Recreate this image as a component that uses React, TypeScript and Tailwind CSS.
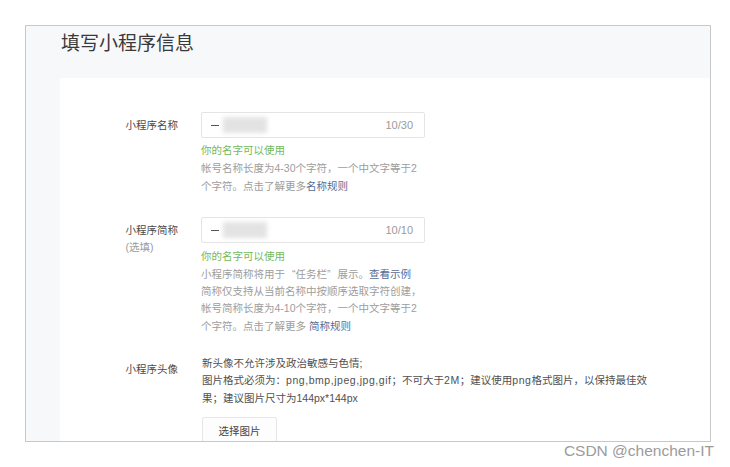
import React from "react";

const font = { fontFamily: '"Liberation Sans", "Noto Sans CJK SC", sans-serif' };

function NameInput({ count }: { count: string }) {
  return (
    <div className="w-[224px] h-[26px] border border-[#e4e4e4] rounded-[2px] bg-white flex items-center pl-[9px] pr-[11px]">
      <div className="w-[8px] h-[1px] bg-[#555]" />
      <div className="ml-[4px] w-[44px] h-[16px] bg-[#e3e3e3] blur-[2px]" />
      <div className="flex-1" />
      <div className="text-[11px] text-[#9a9a9a]">{count}</div>
    </div>
  );
}

function L({ children }: { children: React.ReactNode }) {
  return <span className="tracking-[0.55px]">{children}</span>;
}

export default function App() {
  return (
    <div className="w-[730px] h-[467px] bg-white pt-[25px] pl-[25px] text-[10.5px]" style={font}>
      <div className="w-[686px] h-[417px] border border-[#c8c8c8] bg-[#f7f8fa] overflow-hidden flex flex-col">
        <div className="h-[52px] shrink-0 pl-[35px] pt-[6px] text-[19px] leading-[24px] text-[#3a3a3a]">
          填写小程序信息
        </div>
        <div className="ml-[34px] flex-1 bg-white pt-[34px] flex flex-col">
          {/* Row 1 */}
          <div className="flex">
            <div className="w-[118px] text-right text-[#4a4a4a] leading-[26px]">小程序名称</div>
            <div className="ml-[23px] flex flex-col">
              <NameInput count="10/30" />
              <div className="mt-[3px] leading-[18px] text-[#74b85c]">你的名字可以使用</div>
              <div className="leading-[18px] text-[#9d9d9d] whitespace-nowrap">帐号名称长度为4-30个字符，一个中文字等于2</div>
              <div className="leading-[18px] text-[#9d9d9d] whitespace-nowrap">
                个字符。点击了解更多<span className="text-[#576b95]">名称规则</span>
              </div>
            </div>
          </div>
          {/* Row 2 */}
          <div className="flex mt-[22px]">
            <div className="w-[118px] flex justify-end">
              <div className="pt-[5px] leading-[17px] text-[#4a4a4a]">
                <div>小程序简称</div>
                <div className="text-[#9a9a9a]">(选填)</div>
              </div>
            </div>
            <div className="ml-[23px] flex flex-col">
              <NameInput count="10/10" />
              <div className="mt-[4px] leading-[18px] text-[#74b85c]">你的名字可以使用</div>
              <div className="leading-[18px] text-[#9d9d9d] whitespace-nowrap">
                小程序简称将用于<span className="inline-block w-[10.5px] text-right">“</span>任务栏<span className="inline-block w-[10.5px]">”</span>展示。<span className="text-[#576b95]">查看示例</span>
              </div>
              <div className="leading-[17px] text-[#9d9d9d] whitespace-nowrap">简称仅支持从当前名称中按顺序选取字符创建，</div>
              <div className="leading-[17px] text-[#9d9d9d] whitespace-nowrap">帐号简称长度为4-10个字符，一个中文字等于2</div>
              <div className="leading-[18px] text-[#9d9d9d] whitespace-nowrap">
                个字符。点击了解更多 <span className="text-[#576b95]">简称规则</span>
              </div>
            </div>
          </div>
          {/* Row 3 */}
          <div className="flex mt-[19px]">
            <div className="w-[118px] text-right text-[#4a4a4a] pt-[7px] leading-[17px]">小程序头像</div>
            <div className="ml-[24px] flex flex-col text-[#505050]">
              <div className="leading-[18px] whitespace-nowrap">新头像不允许涉及政治敏感与色情;</div>
              <div className="leading-[17px] whitespace-nowrap">
                图片格式必须为：<L>png,bmp,jpeg,jpg,gif</L>；不可大于<L>2M</L>；建议使用<L>png</L>格式图片，以保持最佳效
              </div>
              <div className="leading-[18px] whitespace-nowrap">果；建议图片尺寸为144px*144px</div>
              <div className="mt-[10px] w-[75px] h-[30px] border border-[#e6e6e6] rounded-[2px] bg-[#fdfdfd] flex items-center justify-center text-[#444]">
                选择图片
              </div>
            </div>
          </div>
        </div>
      </div>
      <div className="pr-[16px] text-right text-[15.5px] leading-[17px] text-[#9b9b9b]" style={{ fontFamily: '"Liberation Sans", Arial, sans-serif' }}>
        CSDN @chenchen-IT
      </div>
    </div>
  );
}
